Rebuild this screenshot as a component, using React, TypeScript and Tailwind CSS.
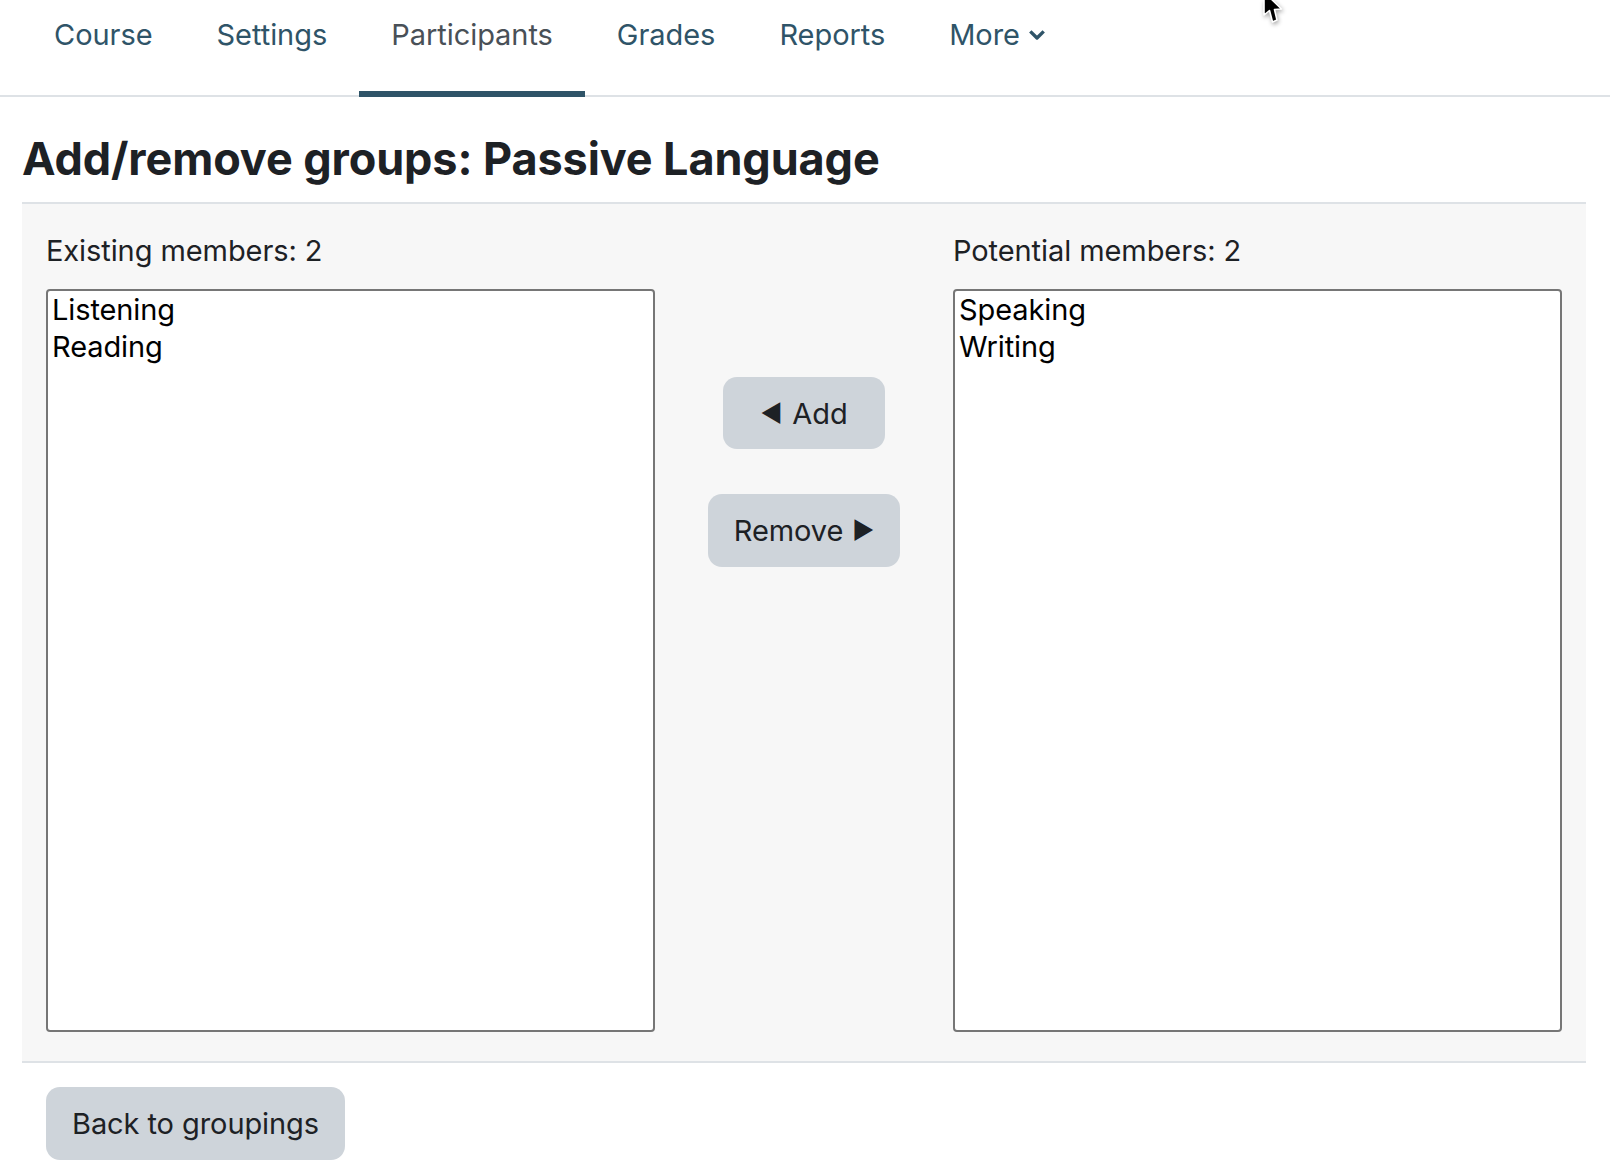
import React from "react";

const navItems = ["Course", "Settings", "Participants", "Grades", "Reports"];

function Nav() {
  return (
    <nav className="flex h-[97px] items-stretch border-b-2 border-[#dee2e6] pl-[22px] tracking-[-0.05px]">
      {navItems.map((label) => {
        const active = label === "Participants";
        return (
          <a
            key={label}
            className={
              active
                ? "mb-[-2px] h-[97px] border-b-[6px] border-[#2f5468] px-8 pt-3 text-[#495057]"
                : "mb-[-2px] h-[97px] px-8 pt-3 text-[#2f5468]"
            }
          >
            {label}
          </a>
        );
      })}
      <a className="flex h-[57px] items-start gap-[9px] px-8 pt-3 text-[#2f5468]">
        More
        <svg className="mt-[18px]" width="16" height="10" viewBox="0 0 16 10" fill="none" aria-hidden="true">
          <path d="M1.3 1.4 8 8l6.7-6.6" stroke="#2f5468" strokeWidth="3.4" strokeLinejoin="round" />
        </svg>
      </a>
    </nav>
  );
}

function Listbox({ options }: { options: string[] }) {
  return (
    <select
      multiple
      className="h-[743px] w-[609px] overflow-hidden rounded border-2 border-[#767676] bg-white pt-px text-[29px] tracking-[-0.1px] text-black outline-none"
    >
      {options.map((o) => (
        <option key={o} className="min-h-[37px] pl-1">
          {o}
        </option>
      ))}
    </select>
  );
}

const btn = "rounded-[14px] bg-[#ced4da] text-[#1d2125]";

export default function App() {
  return (
    <div className="relative min-h-[1176px] bg-white text-[29px] leading-[45px] tracking-[-0.08px] text-[#1d2125] [font-family:Inter,'Liberation_Sans',sans-serif]">
      <Nav />
      <h2 className="pl-[22px] pt-[35px] pb-[16px] text-[45px] leading-[54px] font-bold tracking-[-0.1px]">
        Add/remove groups: Passive Language
      </h2>
      <div className="ml-[22px] mr-[24px] grid grid-cols-[609px_1fr_609px] border-y-2 border-[#dee2e6] bg-[#f7f7f7] px-6 pb-[29px] pt-6">
        <div className="flex flex-col">
          <label className="mb-4">Existing members: 2</label>
          <Listbox options={["Listening", "Reading"]} />
        </div>
        <div className="flex flex-col items-center gap-[45px] pt-[149px]">
          <button className={`${btn} inline-flex items-center gap-[10px] px-[37px] py-[13.5px]`}>
            <span className="text-[24px]">◄</span>
            Add
          </button>
          <button className={`${btn} inline-flex items-center gap-[9px] px-[26px] py-[14px]`}>
            Remove
            <span className="text-[24px]">►</span>
          </button>
        </div>
        <div className="flex flex-col">
          <label className="mb-4">Potential members: 2</label>
          <Listbox options={["Speaking", "Writing"]} />
        </div>
      </div>
      <div className="pl-[46px] pt-6">
        <button className={`${btn} px-[26px] py-[14px]`}>Back to groupings</button>
      </div>
      <svg
        className="absolute left-[1258px] top-0 drop-shadow-[1px_2px_2px_rgba(0,0,0,0.35)]"
        width="30"
        height="28"
        viewBox="0 0 30 28"
        aria-hidden="true"
      >
        <path d="M6 -8V15L11.5 10.5 14.5 22 19 20 16.5 9.5 23.5 9Z" fill="#000" stroke="#fff" strokeWidth="1.6" strokeLinejoin="round" />
      </svg>
    </div>
  );
}
